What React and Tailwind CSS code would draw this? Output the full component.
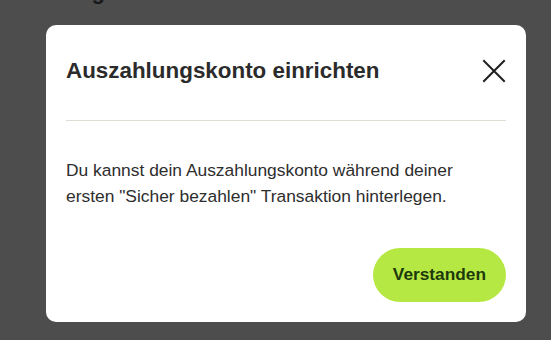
export default function App() {
  return (
    <div className="relative w-[551px] h-[340px] overflow-hidden bg-[#4d4d4d]" style={{ fontFamily: '"Liberation Sans", Arial, sans-serif' }}>
      <div className="absolute right-[446px] top-[-19px] text-[22px] font-bold text-[#1a1a1a] leading-none">Zahlung</div>
      <div className="pt-[25px] pl-[46px]">
        <div className="w-[480px] h-[297px] bg-white rounded-[10px] px-[20px] flex flex-col">
          <div className="flex items-center justify-between pt-[23px] pb-[26px]">
            <h2 className="text-[22.4px] font-bold text-[#2b2b2b] leading-[46px]">Auszahlungskonto einrichten</h2>
            <button className="w-[46px] h-[46px] flex items-center justify-end">
              <svg width="24" height="24" viewBox="0 0 24 24" fill="none" stroke="#1f1f1f" strokeWidth="2" strokeLinecap="square">
                <path d="M2 2 L22 22 M22 2 L2 22" />
              </svg>
            </button>
          </div>
          <div className="h-px bg-[#deded6]" />
          <p className="mt-[36px] text-[17.4px] leading-[26px] text-[#2e2e2e]">
            Du kannst dein Auszahlungskonto während deiner<br />ersten "Sicher bezahlen" Transaktion hinterlegen.
          </p>
          <div className="flex justify-end mt-[39px]">
            <button className="h-[54px] px-[20px] rounded-full bg-[#b6e843] text-[17.3px] font-bold text-[#1d3a0c]">Verstanden</button>
          </div>
        </div>
      </div>
    </div>
  );
}
